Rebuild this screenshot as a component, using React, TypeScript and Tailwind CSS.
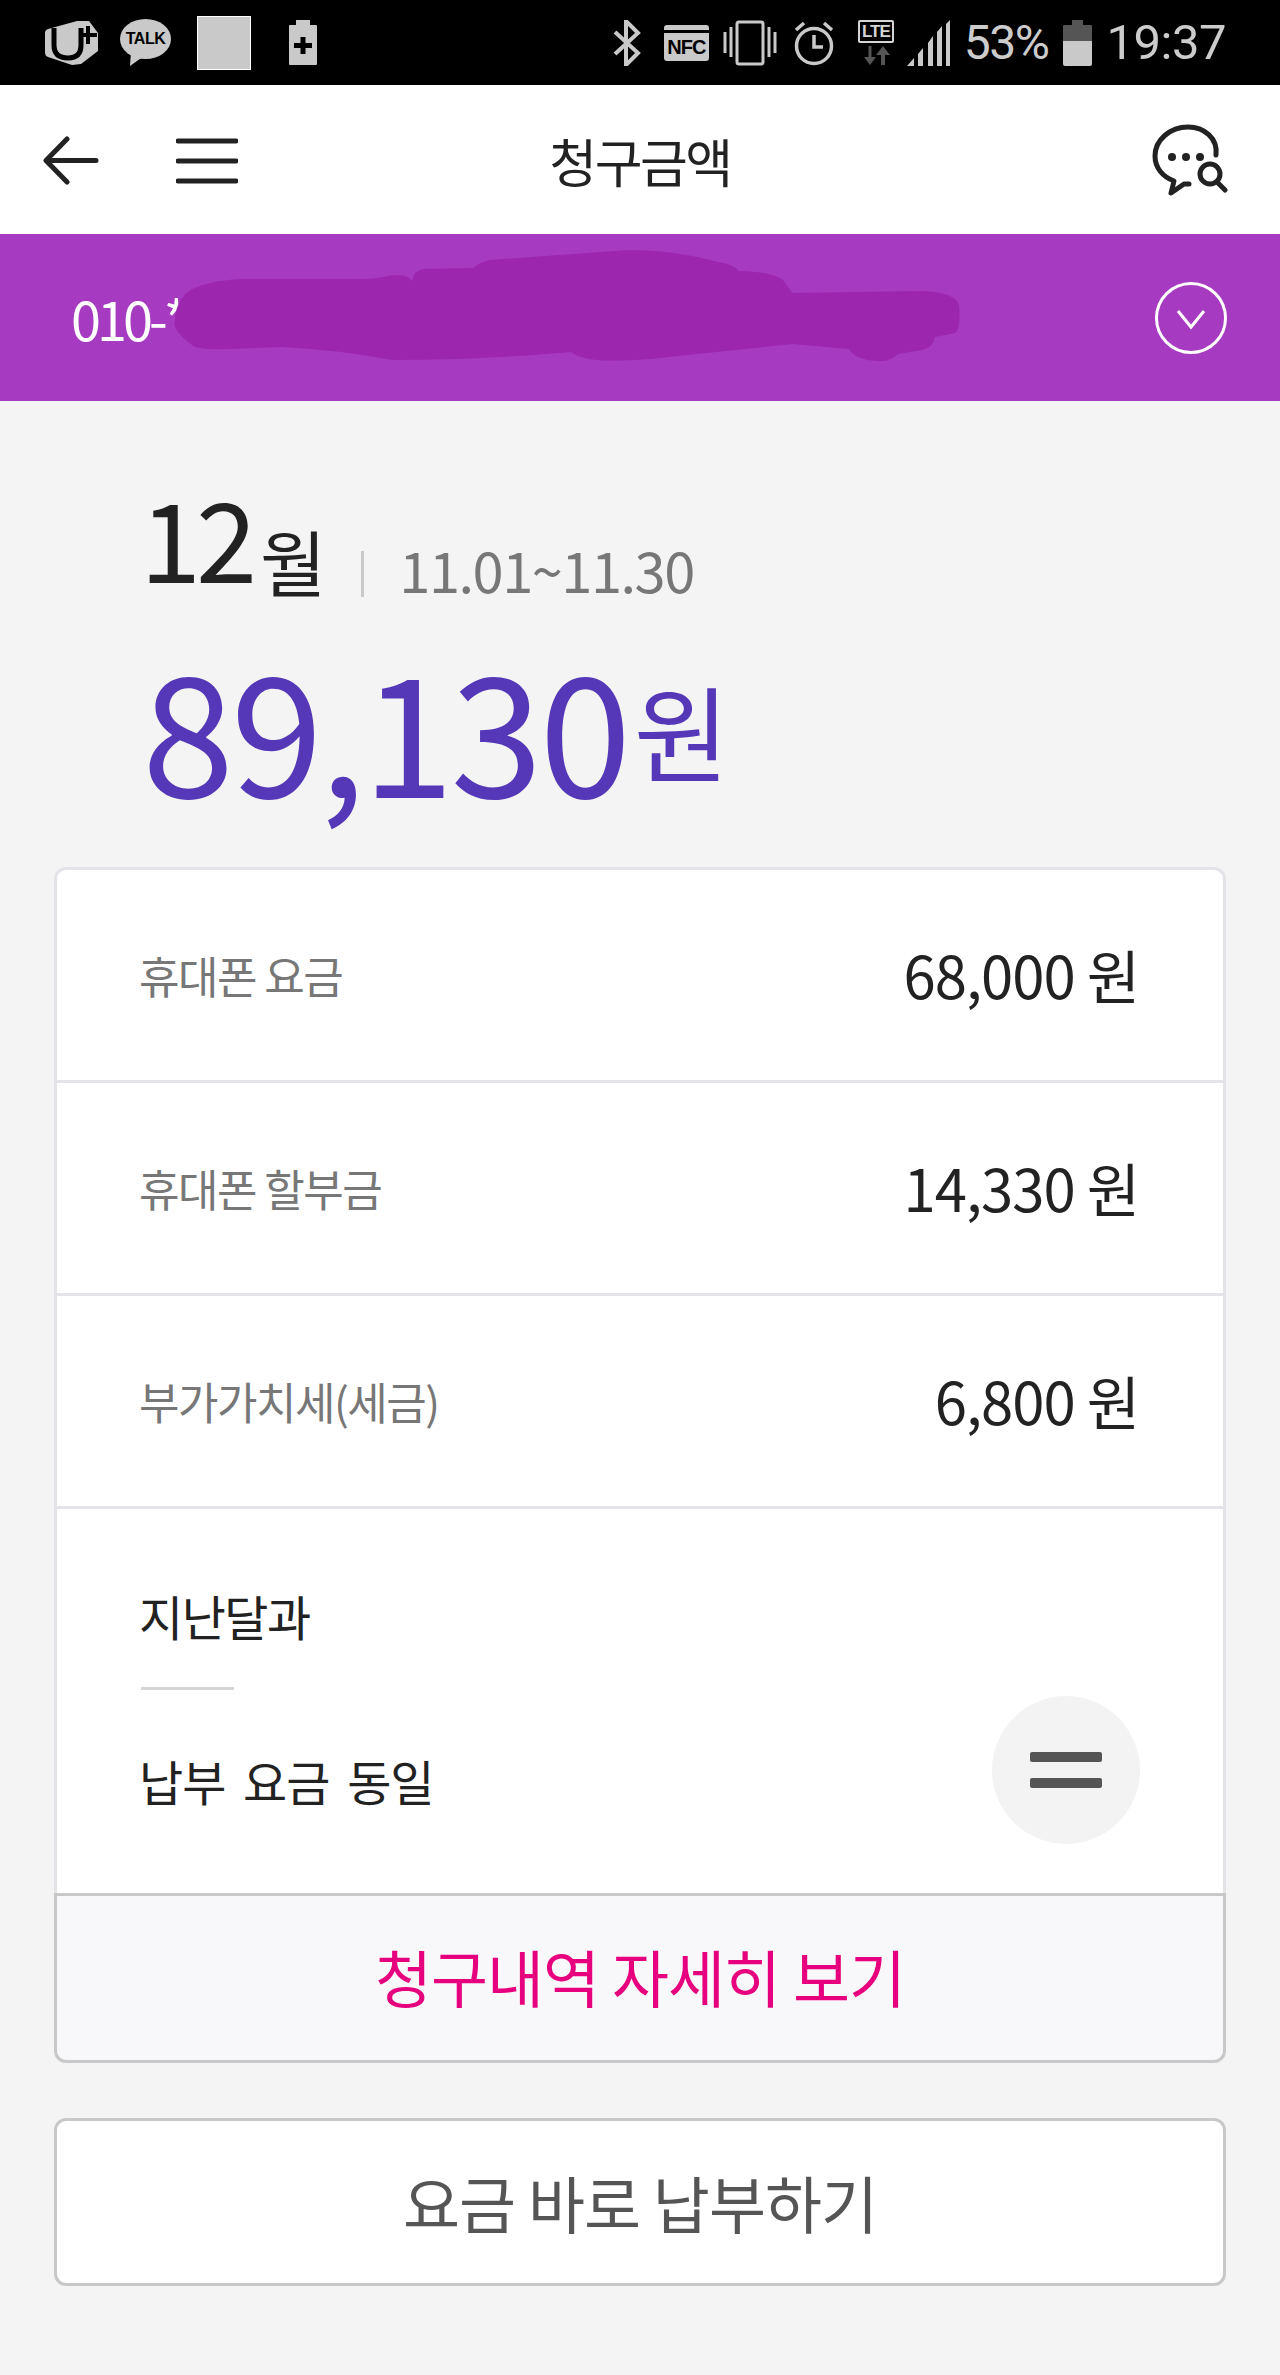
import React from 'react';

const rows = [
  { label: '휴대폰 요금', value: '68,000 원' },
  { label: '휴대폰 할부금', value: '14,330 원' },
  { label: '부가가치세(세금)', value: '6,800 원' },
];

const StatusLeft: React.FC = () => (
  <div className="flex items-center">
    <svg width="54" height="46" viewBox="0 0 54 46" className="ml-[45px]">
      <path d="M3 9 L32 1 L44 1 L53 13 L53 31 L36 44 L27 45 L3 37 Q0 36 0 32 L0 13 Q0 10 3 9 Z" fill="#c9c9c9" />
      <path d="M9 8 L9 25 Q9 38 23 38 Q36 38 36 25 L36 8" fill="none" stroke="#000" strokeWidth="5" />
      <path d="M43 6 L43 24 M35 15 L52 15" stroke="#000" strokeWidth="4" fill="none" />
    </svg>
    <div className="relative ml-[21px] h-[48px] w-[51px]">
      <svg width="51" height="48" viewBox="0 0 51 48" className="absolute left-0 top-0">
        <ellipse cx="25.5" cy="20" rx="25.5" ry="20" fill="#c9c9c9" />
        <path d="M11 32 L10 47 L24 37 Z" fill="#c9c9c9" />
      </svg>
      <span className="absolute left-0 top-[8px] w-[51px] text-center font-['Liberation_Sans',sans-serif] text-[16px] font-bold leading-[24px] tracking-[-0.5px] text-black">TALK</span>
    </div>
    <div className="ml-[26px] h-[54px] w-[54px] border border-white bg-[#c9c9c9]" />
    <svg width="30" height="45" viewBox="0 0 30 45" className="ml-[37px]">
      <path d="M8 0 H22 V5 H28 Q29 5 29 6 V44 Q29 45 28 45 H2 Q1 45 1 44 V6 Q1 5 2 5 H8 Z" fill="#c9c9c9" />
      <path d="M15 17 V34 M6 25.500 H24" stroke="#000" strokeWidth="5" fill="none" />
    </svg>
  </div>
);

const StatusRight: React.FC = () => (
  <div className="flex items-center">
    <svg width="28" height="46" viewBox="0 0 28 46">
      <path d="M2 12 L25 33 L13 45 L13 1 L25 13 L2 34" fill="none" stroke="#c9c9c9" strokeWidth="4" />
    </svg>
    <div className="relative ml-[23px] h-[36px] w-[45px] rounded-[3px] bg-[#c9c9c9]">
      <div className="absolute left-0 top-[5px] h-[3px] w-[45px] bg-black" />
      <span className="absolute left-0 top-[10px] w-[45px] text-center font-['Liberation_Sans',sans-serif] text-[20px] font-bold leading-[24px] tracking-[-1px] text-black">NFC</span>
    </div>
    <svg width="54" height="46" viewBox="0 0 54 46" className="ml-[14px]">
      <rect x="14" y="2" width="26" height="42" rx="2" fill="none" stroke="#c9c9c9" strokeWidth="3" />
      <path d="M2 12 V33 M8 7 V37 M46 7 V37 M52 12 V33" stroke="#c9c9c9" strokeWidth="3" fill="none" />
    </svg>
    <svg width="42" height="46" viewBox="0 0 42 46" className="ml-[16px]">
      <circle cx="21" cy="26" r="17.500" fill="none" stroke="#c9c9c9" strokeWidth="3.500" />
      <path d="M21 15 V27 H30 M3 10 L11 3 M39 10 L31 3" stroke="#c9c9c9" strokeWidth="3.500" fill="none" />
    </svg>
    <div className="ml-[23px] flex h-[46px] w-[36px] flex-col items-center">
      <div className="h-[23px] w-[36px] rounded-[2px] border-2 border-[#d5d5d5] bg-black text-center font-['Liberation_Sans',sans-serif] text-[17px] font-bold leading-[19px] tracking-[-1px] text-[#d5d5d5]">LTE</div>
      <svg width="30" height="20" viewBox="0 0 30 20" className="mt-[3px]">
        <path d="M9 0 V14" stroke="#555" strokeWidth="3" />
        <path d="M3 11 H15 L9 19 Z" fill="#555" />
        <path d="M22 19 V6" stroke="#555" strokeWidth="4" />
        <path d="M15 9 H29 L22 0 Z" fill="#555" />
      </svg>
    </div>
    <svg width="44" height="46" viewBox="0 0 44 46" className="ml-[13px]">
      <path d="M0 46 L7 38 V46 Z M11 34 L16 28 V46 H11 Z M21 23 L26 16 V46 H21 Z M30 12 L35 6 V46 H30 Z M39 4 L43 0 V46 H39 Z" fill="#c9c9c9" />
    </svg>
    <span className="ml-[13px] font-['Roboto',sans-serif] text-[48px] leading-[46px] tracking-[-1.500px] text-[#cccccc]">53%</span>
    <svg width="29" height="46" viewBox="0 0 29 46" className="ml-[15px]">
      <path d="M9 0 H20 V5 H28 Q29 5 29 6 V21 H0 V6 Q0 5 1 5 H9 Z" fill="#555" />
      <path d="M0 21 H29 V44 Q29 46 27 46 H2 Q0 46 0 44 Z" fill="#c9c9c9" />
    </svg>
    <span className="ml-[14px] mr-[54px] font-['Roboto',sans-serif] text-[49px] leading-[46px] tracking-[-0.500px] text-[#cccccc]">19:37</span>
  </div>
);

export default function App() {
  return (
    <div className="flex min-h-[2375px] w-full flex-col bg-[#f4f4f4] font-['Noto_Sans_CJK_KR','Noto_Sans',sans-serif]">
      <div className="flex h-[85px] items-center justify-between bg-black">
        <StatusLeft />
        <StatusRight />
      </div>

      <header className="grid h-[149px] grid-cols-[1fr_auto_1fr] items-center bg-white">
        <div className="flex items-center pt-[2px]">
          <svg width="56" height="50" viewBox="0 0 56 50" className="ml-[43px]">
            <path d="M53 24.500 H4 M24 3 L3 24.500 L24 46" fill="none" stroke="#222" strokeWidth="5" strokeLinecap="round" strokeLinejoin="round" />
          </svg>
          <svg width="62" height="46" viewBox="0 0 62 46" className="ml-[77px]">
            <path d="M2 3 H60 M2 23 H60 M2 43 H60" stroke="#222" strokeWidth="5" strokeLinecap="round" />
          </svg>
        </div>
        <h1 className="pt-[2px] text-[52px] font-normal leading-[60px] tracking-[-2.500px] text-[#222]">청구금액</h1>
        <div className="flex justify-end">
          <svg width="76" height="72" viewBox="0 0 76 72" className="mr-[52px]">
            <path d="M64 31 C66 14 52 3 36 3 C18 3 3 16 3 32 C3 44 11 53 22 57 L19 69 L32 60 L37 60" fill="none" stroke="#222" strokeWidth="5" strokeLinejoin="round" strokeLinecap="round" />
            <circle cx="20" cy="33" r="4" fill="#222" />
            <circle cx="34" cy="33" r="4" fill="#222" />
            <circle cx="48" cy="33" r="4" fill="#222" />
            <circle cx="58" cy="50" r="10" fill="none" stroke="#222" strokeWidth="5" />
            <path d="M65 58 L73 66" stroke="#222" strokeWidth="5" strokeLinecap="round" />
          </svg>
        </div>
      </header>

      <div className="relative flex h-[167px] items-center justify-between bg-[#a63ac0]">
        <span className="ml-[71px] text-[54px] leading-[60px] tracking-[-4px] text-white">010-*</span>
        <svg width="1280" height="167" viewBox="0 234 1280 167" className="absolute left-0 top-0">
          <path
            d="M192 289 Q215 279 245 279 L351 279 Q375 280 392 275 Q408 274 412 281 Q414 270 424 269 L473 268 Q480 262 490 260 Q560 255 629 250 Q675 250 718 262 Q733 264 739 271 Q775 272 784 281 L792 293 L922 291 Q955 292 959 305 Q961 330 955 333 L935 337 Q933 348 922 350 L898 354 Q890 362 878 361 Q855 360 849 349 L792 344 L678 356 Q630 362 596 360 Q578 358 571 352 Q480 360 392 360 Q340 350 282 347 L229 349 Q195 350 192 345 Q172 330 175 321 Q175 300 192 289 Z"
            fill="#9c27ae"
          />
        </svg>
        <svg width="72" height="72" viewBox="0 0 72 72" className="relative mr-[53px]">
          <circle cx="36" cy="36" r="34.500" fill="none" stroke="#fff" strokeWidth="3" />
          <path d="M23 29 L36 45 L49 29" fill="none" stroke="#fff" strokeWidth="3" />
        </svg>
      </div>

      <main className="flex flex-col px-[54px]">
        <div className="ml-[86px] mt-[69px] flex h-[130px] items-end">
          <span className="text-[110px] leading-[130px] tracking-[-5px] text-[#222]">12</span>
          <span className="ml-[8px] text-[72px] leading-[80px] tracking-[-2px] text-[#222]">월</span>
          <div className="mb-[3px] ml-[37px] h-[46px] w-[3px] bg-[#c9c9c9]" />
          <span className="mb-[-4px] ml-[35px] text-[56px] leading-[70px] tracking-[-1.500px] text-[#777]">11.01~11.30</span>
        </div>
        <div className="ml-[88px] mt-[51px] flex h-[170px] items-end">
          <span className="text-[166px] leading-[190px] tracking-[-3.500px] text-[#5438b8]">89,130</span>
          <span className="mb-[31px] ml-[6px] text-[104px] leading-[120px] text-[#5438b8]">원</span>
        </div>

        <section className="mt-[46px]">
          <div className="rounded-t-[12px] border-[3px] border-b-0 border-[#e4e4e8] bg-white">
            {rows.map((row) => (
              <div key={row.label} className="flex h-[213px] items-center justify-between border-b-[3px] border-[#e4e4e8] pl-[82px] pr-[84px]">
                <span className="text-[44px] tracking-[-1.500px] text-[#777]">{row.label}</span>
                <span className="pb-[2px] text-[58px] tracking-[-1px] text-[#222]">{row.value}</span>
              </div>
            ))}
            <div className="relative h-[384px] pl-[82px] pt-[76px]">
              <p className="text-[48px] leading-[60px] tracking-[-1.500px] text-[#222]">지난달과</p>
              <div className="ml-[2px] mt-[42px] h-[3px] w-[93px] bg-[#d5d5d5]" />
              <p className="mt-[60px] text-[48px] leading-[60px] tracking-[-1px] [word-spacing:8px] text-[#222]">납부 요금 동일</p>
              <div className="absolute left-[935px] top-[187px] flex h-[148px] w-[148px] flex-col items-center justify-center gap-[16px] rounded-full bg-[#f3f3f3]">
                <div className="h-[10px] w-[72px] rounded-[2px] bg-[#555]" />
                <div className="h-[10px] w-[72px] rounded-[2px] bg-[#555]" />
              </div>
            </div>
          </div>
          <button className="flex h-[170px] w-full items-center justify-center rounded-b-[12px] border-[3px] border-[#c8c8c8] bg-[#f8f8fa] pb-[4px] text-[62px] tracking-[-1px] text-[#e6007e]">
            청구내역 자세히 보기
          </button>
        </section>

        <button className="mt-[55px] flex h-[168px] items-center justify-center rounded-[12px] border-[3px] border-[#c8c8c8] bg-white text-[62px] tracking-[-1px] text-[#555]">
          요금 바로 납부하기
        </button>
      </main>
    </div>
  );
}
